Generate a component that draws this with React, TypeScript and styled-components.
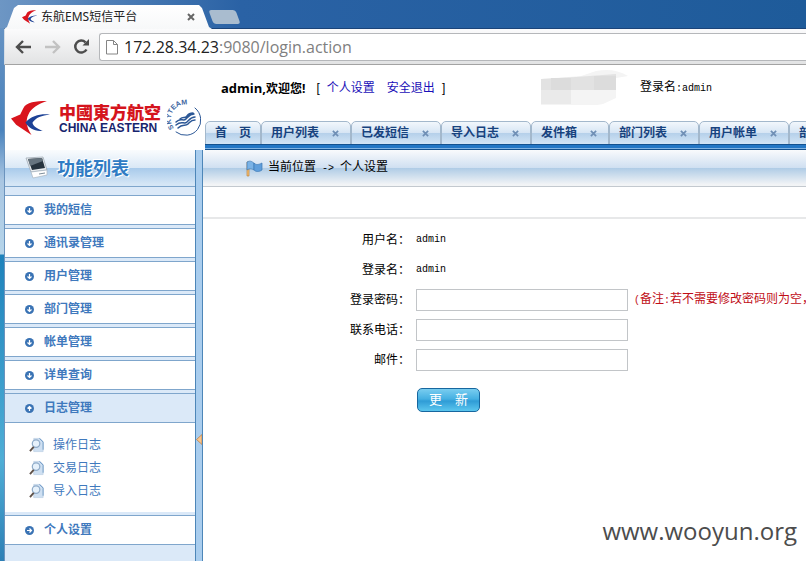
import React from 'react';
import styled, { createGlobalStyle } from 'styled-components';

const cjk = '"Noto Sans CJK SC", sans-serif';
const blueText = '#3f79bd';
const itemLine = '#7fa6cc';

const GlobalStyle = createGlobalStyle`
  * { box-sizing: border-box; }
  body { margin: 0; background: #fff; font: 12px/16px "Liberation Sans", ${cjk}; color: #000; }
  a { text-decoration: none; }
  ul { list-style: none; margin: 0; padding: 0; }
  button { font: inherit; border: 0; padding: 0; background: none; }
  svg { display: block; flex: none; }
`;

const Desktop = styled.div`
  position: relative;
  display: flex;
  flex-direction: column;
  min-height: 100vh;
  padding-left: 4px;
  overflow: hidden;
  background:
    linear-gradient(90deg, #6d96c4 0, #2a62a5 240px, #1e5b9a 100%) top / 100% 28px no-repeat,
    linear-gradient(#6d96c4 0, #4a83bd 130px, #a9c6e2 180px, #b6d5ea 254px, #1e82bb 255px, #4faed6 460px, #2d7fb5 100%);
`;

/* Browser frame */
const TabRow = styled.div`
  display: flex;
  align-items: flex-end;
  height: 29px;
  background: linear-gradient(#1b4479, #1b4479) bottom / 100% 1px no-repeat;
`;

const BrowserTab = styled.div`
  display: flex;
  align-items: center;
  width: 208px;
  height: 24px;
  padding: 0 15px 0 18px;
  background: linear-gradient(#fff, #f7f8f9);
  clip-path: polygon(0 100%, 3px 92%, 10px 12%, 14px 0, 195px 0, 198px 12%, 205px 92%, 100% 100%);
`;

const BrowserTitle = styled.span`
  flex: 1;
  margin-left: 3px;
  font: 12px/16px "Noto Sans", ${cjk};
  color: #222;
`;

const IconButton = styled.button<{ $tone: string }>`
  display: flex;
  padding: 2px;
  color: ${(p) => p.$tone};
`;

const NewTab = styled.button`
  align-self: center;
  width: 27px;
  height: 14px;
  margin: 5px 0 0 -1px;
  background: #a9bccf;
  border-radius: 3px;
  transform: skewX(20deg);
`;

const Toolbar = styled.div`
  display: flex;
  align-items: center;
  height: 36px;
  padding-left: 8px;
  gap: 8px;
  background: linear-gradient(#fbfbfc, #e2e3e4);
  border-bottom: 1px solid #a3a3a3;
  border-left: 1px solid #d5dde6;
`;

const AddressBar = styled.label`
  display: flex;
  flex: 1;
  align-items: center;
  gap: 6px;
  height: 28px;
  margin-left: -1px;
  padding-left: 6px;
  background: #fff;
  border: 1px solid #b5b7ba;
  border-right: 0;
  border-radius: 3px 0 0 3px;
`;

const Address = styled.div`
  font: 16px/24px "Open Sans", sans-serif;
  color: #222;
`;

const AddressTail = styled.span`
  color: #808080;
`;

/* Page */
const Page = styled.div`
  display: flex;
  flex: 1;
  flex-direction: column;
  background: #fff;
  border-left: 1px solid #6b93bd;
`;

const Header = styled.header`
  display: flex;
  height: 85px;
`;

const Logo = styled.div`
  display: flex;
  align-items: center;
  flex: none;
  width: 200px;
  padding: 20px 4px 0 6px;
`;

const LogoWords = styled.div`
  flex: 1;
  min-width: 0;
  margin-left: 8px;
  white-space: nowrap;
`;

const LogoChinese = styled.div`
  font: 900 17px/20px ${cjk};
  color: #d5141d;
`;

const LogoEnglish = styled.div`
  font: bold 12px/12px "Liberation Sans", sans-serif;
  color: #17246e;
`;

const HeaderMain = styled.div`
  display: flex;
  flex: 1;
  flex-direction: column;
  min-width: 0;
`;

const Greeting = styled.div`
  display: flex;
  align-items: center;
  flex: 1;
  padding: 0 94px 10px 16px;
  white-space: nowrap;
`;

const Welcome = styled.strong`
  font: bold 13px/16px "Open Sans", ${cjk};
`;

const WelcomeTail = styled.span`
  font-size: 12px;
`;

const AccountLinks = styled.nav`
  display: flex;
  flex: 1;
  gap: 7px;
  margin-left: 11px;
`;

const AccountLink = styled.a`
  color: #1a10b8;
  & + & { margin-left: 5px; }
`;

const Mono = styled.span`
  font: 10px/16px "Liberation Mono", monospace;
  white-space: pre;
`;

const LoginName = styled.div`
  margin-left: 8px;
`;

const Tabs = styled.nav`
  display: flex;
  height: 23px;
  overflow: hidden;
`;

const TabBar = styled.div`
  height: 6px;
  background: linear-gradient(#14528f 0 1px, #2477c5 1px 4px, #7fb2e2 4px 5px, #14528f 5px);
`;

const PageTab = styled.div`
  display: flex;
  flex: none;
  align-items: center;
  gap: 11px;
  height: 24px;
  padding: 0 9px;
  background: linear-gradient(#f2f7fc 0, #d6e5f4 50%, #b5d0ea 51%, #d3e5f5 100%);
  border: 1px solid #a3b8cc;
  border-radius: 5px 5px 0 0;
`;

const PageTabLink = styled.a`
  color: #17427e;
  font-weight: bold;
  white-space: pre;
`;

const Body = styled.div`
  display: flex;
  flex: 1;
`;

const Sidebar = styled.aside`
  flex: none;
  width: 190px;
  background: #dbe9f8;
`;

const SidebarTitle = styled.h2`
  display: flex;
  align-items: center;
  gap: 8px;
  height: 37px;
  margin: 0 0 8px;
  padding: 0 0 2px 20px;
  font: bold 18px/24px ${cjk};
  color: #2f7cc4;
  text-shadow: 0 0 2px #fff, 1px 1px 0 #fff, -1px -1px 0 #fff;
  background: linear-gradient(#fafcfe 0, #d9e8f6 50%, #a9cbeb 51%, #d5e6f6 95%);
  border-bottom: 1px solid ${itemLine};
`;

const Menu = styled.ul`
  display: flex;
  flex-direction: column;
  gap: 3px;
`;

const MenuLink = styled.a<{ $open?: boolean }>`
  display: flex;
  align-items: center;
  gap: 10px;
  height: 30px;
  padding-left: 20px;
  color: ${blueText};
  font-weight: bold;
  background: ${(p) => (p.$open ? '#dbe9f8' : '#fff')};
  border: 1px solid ${itemLine};
  border-width: 1px 0;
`;

const SubMenu = styled.ul`
  height: 89px;
  padding: 10px 0 0 24px;
  background: #fff;
`;

const SubLink = styled.a`
  display: flex;
  align-items: center;
  gap: 8px;
  height: 23px;
  color: ${blueText};
`;

const Splitter = styled.button`
  display: flex;
  align-items: center;
  justify-content: center;
  flex: none;
  width: 8px;
  padding-top: 168px;
  background: #a9cdee;
  border: solid #4d86b8;
  border-width: 0 1px;
`;

const Content = styled.main`
  flex: 1;
  min-width: 0;
`;

const Breadcrumb = styled.div`
  display: flex;
  align-items: center;
  height: 37px;
  padding-left: 43px;
  background: linear-gradient(#f9fafc 0, #cfdff1 50%, #b0cce6 51%, #f2f4f6 96%);
  border-bottom: 1px solid #c3c9cf;
`;

const Place = styled.span`
  margin-left: 5px;
`;

const Band = styled.div`
  height: 32px;
  border-bottom: 2px solid #e7e8e9;
`;

const Form = styled.form`
  padding-top: 6px;
`;

const Row = styled.div`
  display: flex;
  align-items: center;
  gap: 6px;
  height: 30px;
  white-space: nowrap;
`;

const FieldName = styled.label`
  flex: none;
  width: calc(34% + 2px);
  text-align: right;
`;

const Field = styled.input`
  flex: none;
  width: 212px;
  height: 22px;
  padding: 0 4px;
  font: inherit;
  border: 1px solid #c2c5c8;
`;

const Note = styled.span`
  color: #c00d16;
`;

const Actions = styled.div`
  padding: 13px 0 0 calc(34% + 9px);
`;

const SubmitButton = styled.button`
  display: block;
  width: 63px;
  height: 24px;
  color: #fff;
  font-size: 13px;
  background: linear-gradient(#79cdf0 0, #45b0e2 45%, #2f9cd6 55%, #5bc6ee 100%);
  border: 1px solid #17679f;
  border-radius: 5px;
`;

const Watermark = styled.div`
  position: absolute;
  right: 9px;
  bottom: 14px;
  font: 24px/32px "Open Sans", sans-serif;
  color: #4c4c4c;
`;

const Cross = ({ size }: { size: number }) => (
  <svg width={size} height={size} viewBox="0 0 8 8" stroke="currentColor" strokeWidth="2">
    <path d="M1 1l6 6M7 1L1 7" />
  </svg>
);

const Bird = ({ size }: { size: number }) => (
  <svg width={size} height={size} viewBox="0 0 39 39">
    <path d="M35 3C24 3 15 4 12 10L9 16 0 20l5 6 15 10C15 28 14 22 17 16 20 10 26 6 35 3z" fill="#d9151e" />
    <path d="M38 16C29 15 20 17 14 24c3 5 9 9 17 8-6-2-10-5-10-8 3-5 9-7 17-8z" fill="#1d4296" />
  </svg>
);

const Arrow = ({ forward }: { forward?: boolean }) => (
  <svg width="17" height="16" viewBox="0 0 17 16" fill="none" stroke="currentColor" strokeWidth="2.4">
    <path d={forward ? 'M1 8h13M9 2l6 6-6 6' : 'M16 8H3M8 2L2 8l6 6'} />
  </svg>
);

const Reload = () => (
  <svg width="17" height="17" viewBox="0 0 17 17">
    <path d="M13.5 11.5A6 6 0 1 1 12.5 4.3" fill="none" stroke="currentColor" strokeWidth="2.5" />
    <path d="M16 1v6.5H9.500z" fill="currentColor" />
  </svg>
);

const SheetIcon = () => (
  <svg width="12" height="16" viewBox="0 0 12 16" fill="#fff" stroke="#858585">
    <path d="M.5 1.5h7l4 4v9.5H.5zM7.500 1.500v4h4" />
  </svg>
);

const SkyTeam = () => (
  <svg width="34" height="38" viewBox="0 0 34 38">
    <defs>
      <path id="ring" d="M7 29A14 14 0 0 1 30 11" />
    </defs>
    <text fontFamily="Liberation Sans" fontWeight="bold" fontSize="7" fill="#3d659f">
      <textPath href="#ring">SKYTEAM</textPath>
    </text>
    <g fill="none" stroke="#2b5796" strokeLinecap="round">
      <path d="M28 9A15 15 0 0 1 9 33" strokeWidth="1" />
      <path d="M9 23c5-5 7 0 10-3s4-5 8-5M9 26c6-5 8 0 11-3s4-5 8-5M11 29c5-5 7-1 10-4s3-4 7-4M13 20c3-3 5 0 7-3s4-3 6-3" strokeWidth="1.5" />
    </g>
  </svg>
);

const Monitor = () => (
  <svg width="24" height="26" viewBox="0 0 24 26">
    <path d="M1 4l17-1 4 13-16 2z" fill="#e8ecef" stroke="#98a4ae" strokeWidth=".7" />
    <path d="M3 5l14-1 3 10-13 2z" fill="#26333e" />
    <path d="M3 5l14-1 1 3-13 5z" fill="#66747f" />
    <path d="M6 18l16-2v5L8 24z" fill="#fff" stroke="#a9b6c2" strokeWidth=".7" />
    <path d="M14 20l6-1" stroke="#7c8c99" />
  </svg>
);

const Flag = () => (
  <svg width="17" height="17" viewBox="0 0 17 17">
    <path d="M1 2h2v14H1z" fill="#f4c27a" stroke="#b9772a" strokeWidth=".6" />
    <path d="M1 2c4-2 5 0 7 1v7c-2-1-4-2-7 0z" fill="#79b2e6" stroke="#3c78b5" strokeWidth=".7" />
    <path d="M8 3c2 2 4 2 8 0v7c-3 2-6 2-8 0z" fill="#5f9edb" stroke="#3c78b5" strokeWidth=".7" />
  </svg>
);

const turns = { down: 0, up: 180, right: -90 };

const Bullet = ({ to }: { to: keyof typeof turns }) => (
  <svg width="9" height="9" viewBox="0 0 9 9">
    <circle cx="4.5" cy="4.5" r="4.5" fill="#3a73b4" />
    <path d="M4.5 2v4M2.500 4.500l2 2 2-2" fill="none" stroke="#fff" strokeWidth="1.2" transform={`rotate(${turns[to]} 4.5 4.5)`} />
  </svg>
);

const Lookup = () => (
  <svg width="16" height="16" viewBox="0 0 17 16">
    <path d="M5 1h7l3 3v11H5z" fill="#cfe0f2" stroke="#b9cde2" strokeWidth=".7" />
    <path d="M11 1l4 4v8" fill="none" stroke="#6f9ac6" />
    <circle cx="7.5" cy="6.5" r="4" fill="#e6f1fb" stroke="#8fabc8" strokeWidth="1.3" />
    <path d="M5 10l-4 4.5" stroke="#5f5148" strokeWidth="2" />
  </svg>
);

const Collapse = () => (
  <svg width="6" height="11" viewBox="0 0 6 11">
    <path d="M6 .5v10L.5 5.500z" fill="#f8c48c" stroke="#b97a3c" strokeWidth=".7" />
  </svg>
);

const Smudge = () => (
  <svg width="91" height="36" viewBox="0 0 91 36">
    <path d="M0 9l40-3 15-5c12-2 22-1 32 5l-12 2v20l-13 6-6 1H0z" fill="#f4f4f4" />
    <path d="M0 9l35-2 40-3v16H0z" fill="#e2e2e2" />
    <path d="M10 8h20v12H10zM53 6h22v14H53z" fill="#dcdcdc" />
    <path d="M0 20h30v14H0z" fill="#eaeaea" />
  </svg>
);

const pageTabs = ['用户列表', '已发短信', '导入日志', '发件箱', '部门列表', '用户帐单', '部门帐单'];
const closedMenus = ['我的短信', '通讯录管理', '用户管理', '部门管理', '帐单管理', '详单查询'];
const logMenus = ['操作日志', '交易日志', '导入日志'];
const account = [
  { label: '用户名：', value: 'admin' },
  { label: '登录名：', value: 'admin' },
];

export default function App() {
  return (
    <Desktop>
      <GlobalStyle />
      <TabRow>
        <BrowserTab>
          <Bird size={16} />
          <BrowserTitle>东航EMS短信平台</BrowserTitle>
          <IconButton $tone="#666" aria-label="关闭"><Cross size={8} /></IconButton>
        </BrowserTab>
        <NewTab aria-label="新标签页" />
      </TabRow>
      <Toolbar>
        <IconButton $tone="#4d4d4d" aria-label="后退"><Arrow /></IconButton>
        <IconButton $tone="#c2c2c2" aria-label="前进"><Arrow forward /></IconButton>
        <IconButton $tone="#4d4d4d" aria-label="刷新"><Reload /></IconButton>
        <AddressBar as="div">
          <SheetIcon />
          <Address>172.28.34.23<AddressTail>:9080/login.action</AddressTail></Address>
        </AddressBar>
      </Toolbar>
      <Page>
        <Header>
          <Logo>
            <Bird size={40} />
            <LogoWords>
              <LogoChinese>中國東方航空</LogoChinese>
              <LogoEnglish>CHINA EASTERN</LogoEnglish>
            </LogoWords>
            <SkyTeam />
          </Logo>
          <HeaderMain>
            <Greeting>
              <Welcome>admin,<WelcomeTail>欢迎您!</WelcomeTail></Welcome>
              <AccountLinks>
                <span>[</span>
                <AccountLink href="#settings">个人设置</AccountLink>
                <AccountLink href="#logout">安全退出</AccountLink>
                <span>]</span>
              </AccountLinks>
              <Smudge />
              <LoginName>登录名<Mono>:admin</Mono></LoginName>
            </Greeting>
            <Tabs>
              <PageTab><PageTabLink href="#home">首　页</PageTabLink></PageTab>
              {pageTabs.map((name) => (
                <PageTab key={name}>
                  <PageTabLink href="#tab">{name}</PageTabLink>
                  <IconButton $tone="#6f8fb5" aria-label={`关闭${name}`}><Cross size={7} /></IconButton>
                </PageTab>
              ))}
            </Tabs>
            <TabBar />
          </HeaderMain>
        </Header>
        <Body>
          <Sidebar>
            <SidebarTitle><Monitor />功能列表</SidebarTitle>
            <Menu>
              {closedMenus.map((name) => (
                <li key={name}><MenuLink href="#menu"><Bullet to="down" />{name}</MenuLink></li>
              ))}
              <li>
                <MenuLink href="#logs" $open><Bullet to="up" />日志管理</MenuLink>
                <SubMenu>
                  {logMenus.map((name) => (
                    <li key={name}><SubLink href="#log"><Lookup />{name}</SubLink></li>
                  ))}
                </SubMenu>
              </li>
              <li><MenuLink href="#settings"><Bullet to="right" />个人设置</MenuLink></li>
            </Menu>
          </Sidebar>
          <Splitter aria-label="收起"><Collapse /></Splitter>
          <Content>
            <Breadcrumb><Flag /><Place>当前位置<Mono>{' -> '}</Mono>个人设置</Place></Breadcrumb>
            <Band />
            <Form>
              {account.map((a) => (
                <Row key={a.label}><FieldName as="span">{a.label}</FieldName><Mono>{a.value}</Mono></Row>
              ))}
              <Row>
                <FieldName htmlFor="password">登录密码：</FieldName>
                <Field id="password" type="password" />
                <Note><Mono>(</Mono>备注<Mono>:</Mono>若不需要修改密码则为空，</Note>
              </Row>
              <Row>
                <FieldName htmlFor="phone">联系电话：</FieldName>
                <Field id="phone" type="text" />
              </Row>
              <Row>
                <FieldName htmlFor="email">邮件：</FieldName>
                <Field id="email" type="text" />
              </Row>
              <Actions><SubmitButton type="button">更　新</SubmitButton></Actions>
            </Form>
          </Content>
        </Body>
      </Page>
      <Watermark>www.wooyun.org</Watermark>
    </Desktop>
  );
}
